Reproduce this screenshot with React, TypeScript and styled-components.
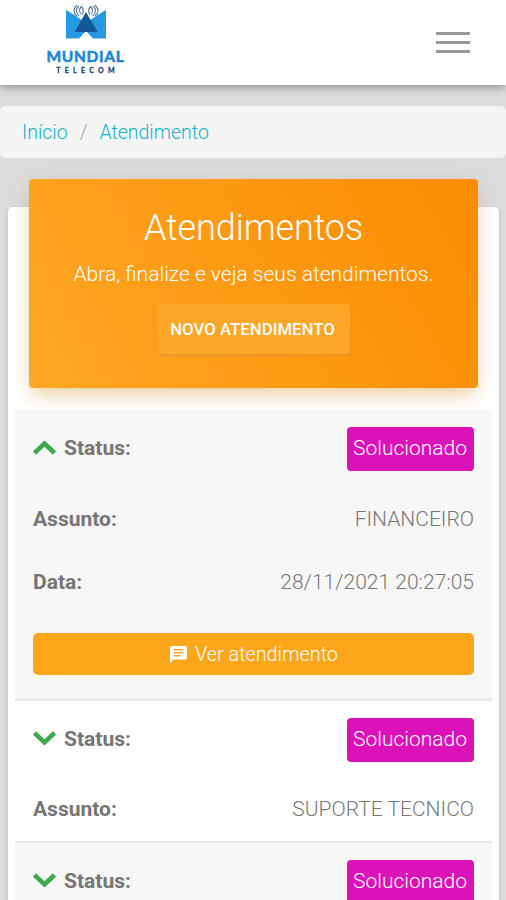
import React from "react";
import styled, { createGlobalStyle } from "styled-components";

const Global = createGlobalStyle`
  * { box-sizing: border-box; }
  html, body { margin: 0; padding: 0; }
  body {
    height: 900px;
    overflow: hidden;
    background: #dcdcdc;
    font-family: Roboto, "Liberation Sans", sans-serif;
    font-weight: 300;
    color: #777;
  }
`;

const Page = styled.div`
  height: 900px;
  overflow: hidden;
`;

const Header = styled.header`
  height: 85px;
  background: #fff;
  box-shadow: 0 2px 9px rgba(0, 0, 0, 0.38);
  display: flex;
  justify-content: space-between;
  padding: 0 36px 0 46px;
`;

const Brand = styled.div`
  width: 79px;
  padding-top: 4px;
  display: flex;
  flex-direction: column;
  align-items: center;
`;

const BrandMark = styled.svg`
  display: block;
  width: 40px;
  height: 35px;
`;

const BrandName = styled.div`
  margin-top: 9px;
  font: 700 15.5px/17px Lato, sans-serif;
  letter-spacing: 0.7px;
  color: #1f87d0;
  white-space: nowrap;
  -webkit-text-stroke: 0.6px #1f87d0;
`;

const BrandSub = styled.div`
  margin-top: 1px;
  font: 700 7px/8px Lato, sans-serif;
  letter-spacing: 4.3px;
  margin-right: -4px;
  color: #24477d;
  white-space: nowrap;
  -webkit-text-stroke: 0.3px #24477d;
`;

const MenuButton = styled.button`
  align-self: center;
  border: 0;
  padding: 0;
  background: none;
  width: 34px;
  height: 21px;
  display: flex;
  flex-direction: column;
  justify-content: space-between;
`;

const MenuBar = styled.span`
  width: 34px;
  height: 3px;
  background: #999;
`;

const Breadcrumb = styled.nav`
  margin-top: 21px;
  height: 52px;
  padding: 0 22px;
  border-radius: 5px;
  background: #f5f5f5;
  display: flex;
  align-items: center;
  gap: 12px;
  font-size: 19.5px;
  color: #a5a5a5;
`;

const Crumb = styled.a`
  color: #14b1c9;
`;

const Card = styled.main`
  margin: 49px 7px 0 8px;
  padding: 0 7px;
  height: 760px;
  border-radius: 5px;
  background: #fff;
  box-shadow: 0 2px 5px rgba(0, 0, 0, 0.14);
  display: flow-root;
`;

const Banner = styled.section`
  position: relative;
  margin: -28px 14px 22px;
  height: 209px;
  padding-top: 30px;
  border-radius: 4px;
  background: linear-gradient(60deg, #ffa726, #fb8c00);
  box-shadow: 0 10px 18px -4px rgba(225, 155, 40, 0.42), 0 3px 26px rgba(0, 0, 0, 0.06);
  color: #fff;
  display: flex;
  flex-direction: column;
  align-items: center;
`;

const Title = styled.h1`
  margin: 0;
  font-size: 36px;
  line-height: 38px;
  font-weight: 300;
  letter-spacing: -0.1px;
`;

const Lead = styled.p`
  margin: 13px 0 0;
  font-size: 21px;
  line-height: 28px;
`;

const NewButton = styled.button`
  margin-top: 16px;
  width: 193px;
  height: 50px;
  border: 0;
  border-radius: 4px;
  background: #fca728;
  box-shadow: 0 2px 2px rgba(225, 140, 60, 0.55);
  color: #fff;
  font: 500 16.8px/20px Roboto, sans-serif;
  padding: 0 2px 0 0;
`;

const Ticket = styled.article<{ $shaded?: boolean; $height: number; $line: number }>`
  height: ${(p) => p.$height}px;
  padding: 17px 18px 0;
  background: ${(p) => (p.$shaded ? "#f7f7f7" : "#fff")};
  border-bottom: ${(p) => p.$line}px solid #e9e9e9;
`;

const Row = styled.div<{ $gap?: number; $height?: number }>`
  height: ${(p) => p.$height ?? 24}px;
  margin-top: ${(p) => p.$gap ?? 0}px;
  display: flex;
  align-items: center;
  justify-content: space-between;
  white-space: nowrap;
`;

const Label = styled.strong<{ $raised?: boolean }>`
  display: flex;
  align-items: center;
  gap: 8px;
  padding-bottom: ${(p) => (p.$raised ? 3 : 0)}px;
  font-size: 21px;
  font-weight: 700;
  color: #757575;
`;

const Value = styled.span`
  font-size: 21px;
`;

const Chevron = styled.svg<{ $up?: boolean }>`
  width: 23px;
  height: 15px;
  transform: ${(p) => (p.$up ? "none" : "rotate(180deg)")};
`;

const Tag = styled.span`
  width: 127px;
  height: 44px;
  border-radius: 4px;
  background: #dc12b9;
  color: #fff;
  font-size: 21px;
  font-weight: 300;
  line-height: 42px;
  padding-right: 1px;
  text-align: center;
`;

const ViewButton = styled.button`
  width: 100%;
  height: 42px;
  margin-top: 39px;
  border: 0;
  border-radius: 5px;
  background: #fba61b;
  color: #fff;
  font: 300 19.8px/24px Roboto, sans-serif;
  padding: 1px 0 0 1px;
  display: flex;
  align-items: center;
  justify-content: center;
  gap: 8px;
`;

const ChatIcon = styled.svg`
  width: 17px;
  height: 17px;
`;

function Status({ open }: { open?: boolean }) {
  return (
    <Row $height={44}>
      <Label $raised>
        <Chevron $up={open} viewBox="0 0 23 15">
          <path d="M1.5 13 11.5 3.500 21.5 13" fill="none" stroke="#40a84a" strokeWidth="4.500" />
        </Chevron>
        Status:
      </Label>
      <Tag>Solucionado</Tag>
    </Row>
  );
}

export default function App() {
  return (
    <Page>
      <Global />
      <Header>
        <Brand>
          <BrandMark viewBox="0 0 40 35">
            <path d="M0 6 10 12 20 19 30 12 40 6V34.500H27L20 27 13 34.500H0Z" fill="#2799df" />
            <path d="M20 8 31.5 28H8.5Z" fill="#125796" />
            <g fill="none" stroke="#54789c" strokeWidth="1.1">
              <path d="M13 2Q8 6 13 12M11 1Q5 7 11 12M15 3Q12 6 15 10M15 2Q19 6 16 11" />
              <path d="M27 2Q32 6 27 12M29 1Q35 7 29 12M25 3Q28 6 25 10M25 2Q21 6 24 11" />
            </g>
          </BrandMark>
          <BrandName>MUNDIAL</BrandName>
          <BrandSub>TELECOM</BrandSub>
        </Brand>
        <MenuButton aria-label="Menu">
          <MenuBar />
          <MenuBar />
          <MenuBar />
        </MenuButton>
      </Header>

      <Breadcrumb>
        <Crumb>Início</Crumb>
        <span>/</span>
        <Crumb>Atendimento</Crumb>
      </Breadcrumb>

      <Card>
        <Banner>
          <Title>Atendimentos</Title>
          <Lead>Abra, finalize e veja seus atendimentos.</Lead>
          <NewButton>NOVO ATENDIMENTO</NewButton>
        </Banner>

        <Ticket $shaded $height={291} $line={3}>
          <Status open />
          <Row $gap={36}>
            <Label>Assunto:</Label>
            <Value>FINANCEIRO</Value>
          </Row>
          <Row $gap={39}>
            <Label>Data:</Label>
            <Value>28/11/2021 20:27:05</Value>
          </Row>
          <ViewButton>
            <ChatIcon viewBox="0 0 17 17">
              <path
                fill="#fff"
                fillRule="evenodd"
                d="M1.500 0h14Q17 0 17 1.500v10.500Q17 13.500 15.500 13.500H3.500L0 17V1.500Q0 0 1.500 0ZM3.500 3v1.500h10V3ZM3.500 6v1.500h10V6ZM3.500 9v1.500h7V9Z"
              />
            </ChatIcon>
            Ver atendimento
          </ViewButton>
        </Ticket>

        <Ticket $height={142} $line={2}>
          <Status />
          <Row $gap={35}>
            <Label>Assunto:</Label>
            <Value>SUPORTE TECNICO</Value>
          </Row>
        </Ticket>

        <Ticket $shaded $height={142} $line={2}>
          <Status />
        </Ticket>
      </Card>
    </Page>
  );
}
